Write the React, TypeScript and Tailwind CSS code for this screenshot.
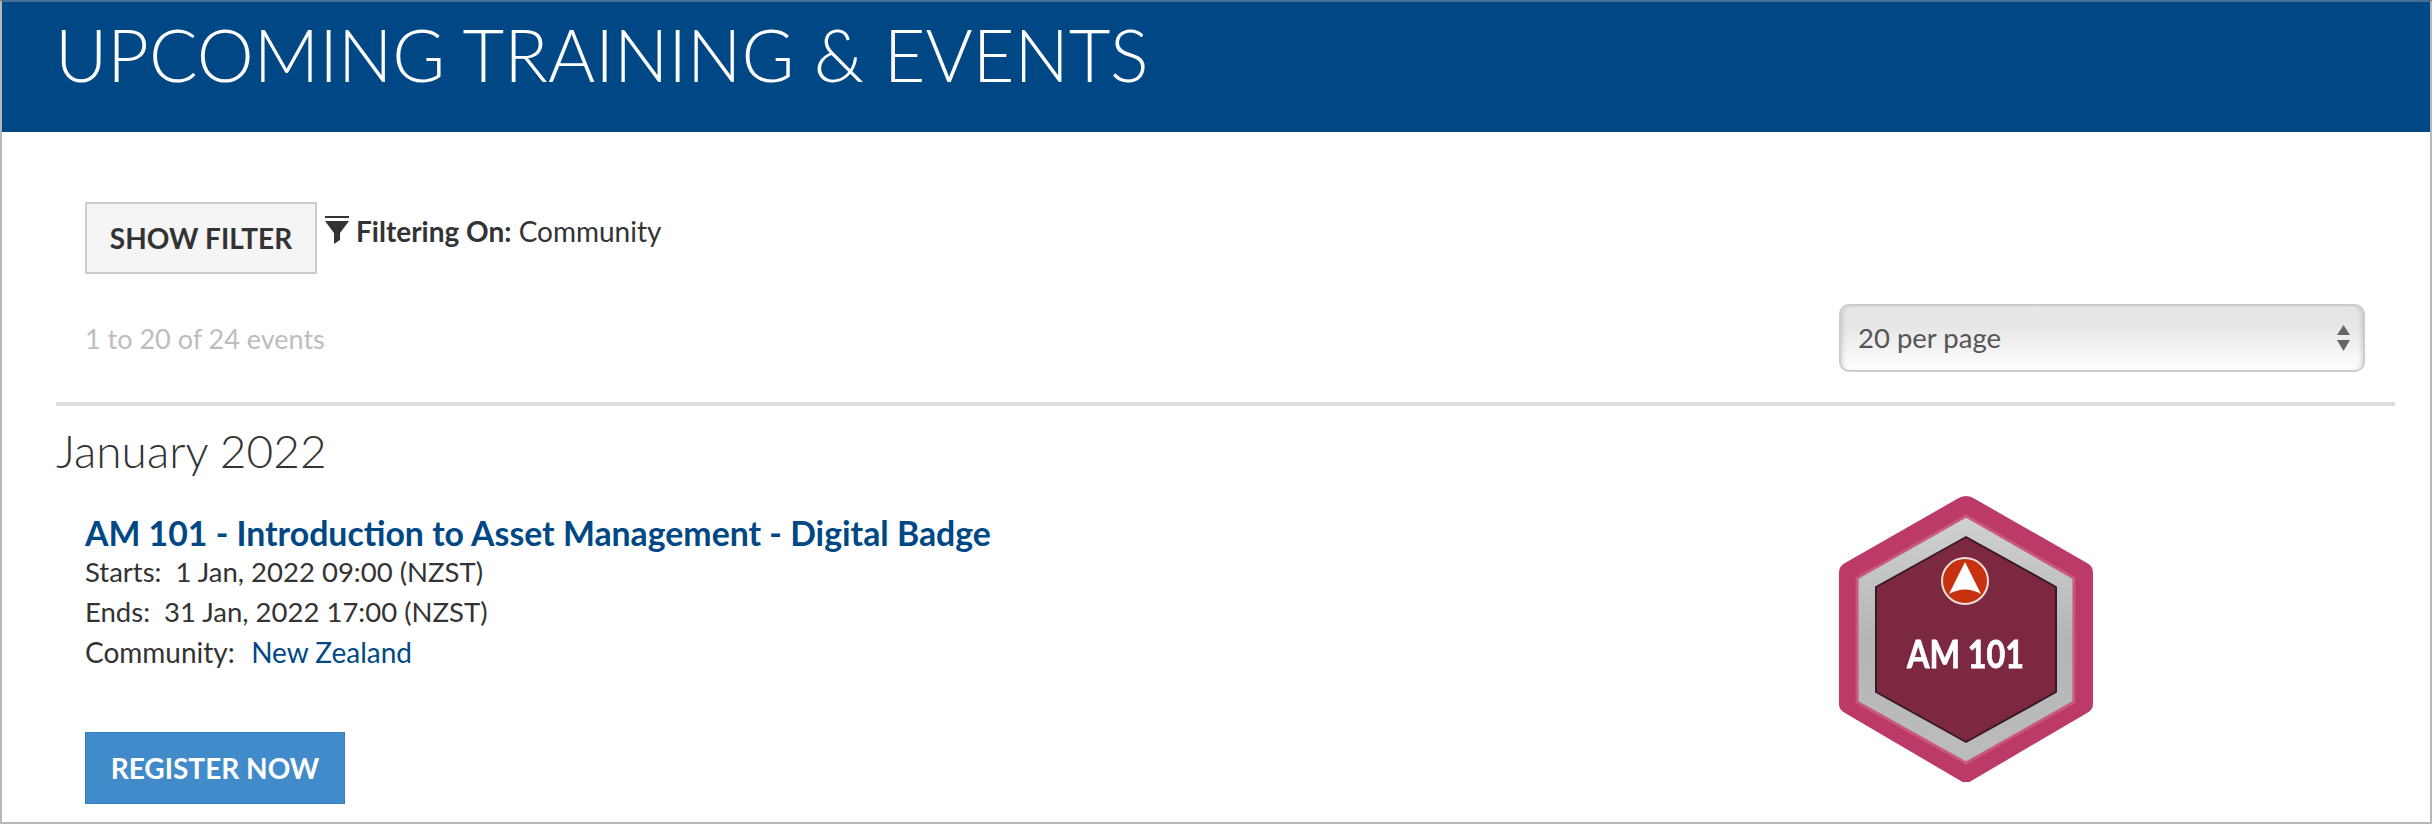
const Badge = () => {
  return (
    <svg width="256" height="286" viewBox="1840 496 256 286" className="blur-[0.7px]">
      <defs>
        <linearGradient id="ring" x1="0" y1="0" x2="0" y2="1">
          <stop offset="0" stopColor="#d0d2d2" />
          <stop offset="0.5" stopColor="#b4b6b6" />
          <stop offset="1" stopColor="#bcbcbc" />
        </linearGradient>
      </defs>
      <path
        d="M1967 496 Q1972 496 1976 499 L2088 563 Q2094 566 2094 573 L2094 704 Q2094 710 2088 713 L1967 784 L1846 713 Q1840 710 1840 704 L1840 573 Q1840 566 1846 563 L1958 499 Q1962 496 1967 496 Z"
        fill="#bb3a68"
      />
      <path d="M1967 516 L2075 578 L2075 702 L1967 763 L1858 702 L1858 578 Z" fill="url(#ring)" stroke="#c9577f" strokeWidth="3" />
      <path d="M1967 537 L2057 587 L2057 692 L1967 742 L1877 692 L1877 587 Z" fill="#7b2840" stroke="#3a1a22" strokeWidth="2" strokeLinejoin="round" />
      <circle cx="1966" cy="581" r="23" fill="#c8310f" stroke="#eadfd8" strokeWidth="2" />
      <path d="M1966 562 L1982 594 Q1966 585 1950 594 Z" fill="#ffffff" />
      <text
        x="1908"
        y="668"
        textLength="117"
        lengthAdjust="spacingAndGlyphs"
        fill="#ffffff"
        stroke="#ffffff"
        strokeWidth="0.8"
        fontFamily="Lato, sans-serif"
        fontWeight="700"
        fontSize="38"
      >
        AM 101
      </text>
    </svg>
  );
};

const App = () => {
  return (
    <div className="h-[824px] w-full overflow-hidden border-2 border-[#b8b8b8] border-t-[#456f95] bg-white font-['Lato',sans-serif] text-[#333]">
      <header className="flex h-[130px] items-start bg-[#004785] pl-[53px] pt-[13px]">
        <h1 className="text-[72px] font-light leading-[78px] text-white">UPCOMING TRAINING &amp; EVENTS</h1>
      </header>

      <div className="pl-[54px] pr-[35px]">
        <div className="pl-[29px] pr-[30px] pt-[70px]">
          <div className="flex items-start">
            <button className="flex h-[72px] w-[232px] items-center justify-center border-2 border-[#ccc] bg-[#f5f5f5] text-[28px] font-bold">
              SHOW FILTER
            </button>
            <svg width="24" height="28" viewBox="0 0 24 28" className="ml-2 mt-[14px] fill-[#333]">
              <rect x="0" y="0" width="24" height="2" />
              <path d="M0 5 H24 L15 17 V24 L9 28 V17 Z" />
            </svg>
            <p className="ml-[7px] mt-[11px] text-[28px] leading-[36px]">
              <strong className="font-bold">Filtering On:</strong> Community
            </p>
          </div>

          <div className="mt-[30px] flex items-center justify-between">
            <span className="pt-[2px] text-[27px] text-[#bdbdbd]">1 to 20 of 24 events</span>
            <div className="flex h-[68px] w-[526px] items-center justify-between rounded-[10px] border-2 border-[#ccc] bg-gradient-to-b from-[#e6e6e6] from-30% to-white pl-[17px] pr-[13px] text-[27.5px] text-[#555] shadow-[inset_4px_0_4px_-2px_rgba(0,0,0,0.12),inset_-4px_0_4px_-2px_rgba(0,0,0,0.12)]">
              <span>20 per page</span>
              <svg width="13" height="26" viewBox="0 0 13 26" className="fill-[#666]">
                <path d="M6.5 0 L13 10 H0 Z M0 15 H13 L6.5 26 Z" />
              </svg>
            </div>
          </div>
        </div>

        <div className="mt-[30px] h-1 bg-[#ddd]" />

        <h2 className="mt-[16px] text-[46px] font-light leading-[58px]">January 2022</h2>

        <div className="flex items-start justify-between pl-[29px]">
          <div className="pt-[31px]">
            <a className="block text-[33.8px] font-bold leading-[44px] text-[#004785]">
              AM 101 - Introduction to Asset Management - Digital Badge
            </a>
            <div className="text-[28px] leading-[40px]">
              <p className="-mt-[3px] text-[27.5px]">Starts:&nbsp; 1 Jan, 2022 09:00 (NZST)</p>
              <p className="text-[27.5px]">Ends:&nbsp; 31 Jan, 2022 17:00 (NZST)</p>
              <p>
                Community:&nbsp; <a className="ml-[2px] text-[#004785]">New Zealand</a>
              </p>
            </div>
            <button className="mt-[60px] flex h-[72px] w-[260px] items-center justify-center border border-[#357ebd] bg-[#428bca] text-[28px] font-bold text-white">
              REGISTER NOW
            </button>
          </div>
          <div className="mr-[300px] mt-[16px]">
            <Badge />
          </div>
        </div>
      </div>
    </div>
  );
};

export default App;
